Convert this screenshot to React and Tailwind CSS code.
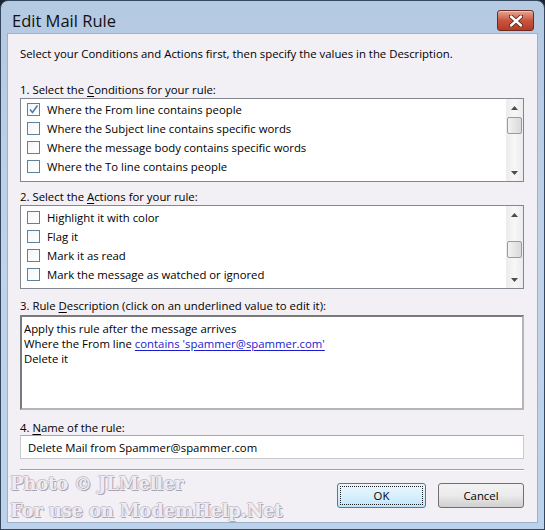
import React from "react";

const conditions = [
  { label: "Where the From line contains people", checked: true },
  { label: "Where the Subject line contains specific words" },
  { label: "Where the message body contains specific words" },
  { label: "Where the To line contains people" },
];

const actions = [
  { label: "Highlight it with color" },
  { label: "Flag it" },
  { label: "Mark it as read" },
  { label: "Mark the message as watched or ignored" },
];

const Checkbox = ({ checked }) => (
  <span className="relative flex h-[13px] w-[13px] shrink-0 items-center justify-center border border-[#5f829b] bg-gradient-to-br from-[#f4f6f8] to-white">
    {checked && (
      <svg width="11" height="11" viewBox="0 0 11 11" className="absolute">
        <path d="M2 5.5 L4.5 8.5 L9.5 1.5" fill="none" stroke="#4a7bbd" strokeWidth="1.6" />
      </svg>
    )}
  </span>
);

const Scrollbar = ({ thumbTop }) => (
  <div className="relative flex w-[17px] flex-col bg-gradient-to-r from-[#ececec] via-[#f7f7f7] to-[#ececec]">
    <div className="flex h-[17px] items-center justify-center">
      <svg width="7" height="4" viewBox="0 0 7 4">
        <path d="M0 4 L3.5 0 L7 4 Z" fill="#4d4d4d" />
      </svg>
    </div>
    <div className="flex-1" />
    <div className="flex h-[17px] items-center justify-center">
      <svg width="7" height="4" viewBox="0 0 7 4">
        <path d="M0 0 L7 0 L3.5 4 Z" fill="#4d4d4d" />
      </svg>
    </div>
    <div
      className={`absolute left-[1px] h-[17px] w-[15px] rounded-[2px] border border-[#9b9b9b] bg-gradient-to-r from-[#f2f2f2] to-[#d9d9d9] ${thumbTop}`}
    />
  </div>
);

const ListBox = ({ items, thumbTop, padTop }) => (
  <div className="flex h-[84px] border border-[#828790] bg-white">
    <div className={`flex flex-1 flex-col pl-[6px] ${padTop}`}>
      {items.map((item, i) => (
        <div key={i} className="flex h-[19px] items-center gap-[7px]">
          <Checkbox checked={item.checked} />
          <span className="text-black">{item.label}</span>
        </div>
      ))}
    </div>
    <Scrollbar thumbTop={thumbTop} />
  </div>
);

const Label = ({ pre, u, post, className }) => (
  <div className={`h-[15px] leading-[15px] text-black ${className}`}>
    {pre}
    <span className="underline underline-offset-2">{u}</span>
    {post}
  </div>
);

export default function App() {
  return (
    <div
      className="h-[530px] w-[545px] bg-[#1a2430] text-[11.35px] leading-[15px]"
      style={{ fontFamily: "'Open Sans', 'Noto Sans', sans-serif" }}
    >
      <div className="relative flex h-full flex-col rounded-t-[8px] border border-[#34475e] bg-gradient-to-b from-[#b4c9e2] via-[#c0d3ea] to-[#bcd2ec]">
        {/* title bar */}
        <div className="flex h-[32px] items-start justify-between pl-[11px] pr-[10px]">
          <span className="pt-[9px] text-[16.5px] leading-[22px] text-[#111]">Edit Mail Rule</span>
          <button className="mt-[9px] flex h-[21px] w-[37px] items-center justify-center rounded-[3px] border border-[#6b2b20] bg-gradient-to-b from-[#e3a593] via-[#c9553f] to-[#b83a24] shadow-[inset_0_1px_0_#f0c4b8]">
            <svg width="14" height="12" viewBox="0 0 14 12">
              <path d="M2 1.5 L12 10.5 M12 1.5 L2 10.5" stroke="#5a2218" strokeWidth="4.2" strokeLinecap="round" />
              <path d="M2 1.5 L12 10.5 M12 1.5 L2 10.5" stroke="#fff" strokeWidth="2.4" strokeLinecap="round" />
            </svg>
          </button>
        </div>

        {/* client area */}
        <div className="mx-[6px] mb-[6px] flex flex-1 flex-col border border-[#9cb1cc] bg-[#f2eff5] pl-[12px] pr-[13px]">
          <div className="mt-[12px] h-[15px] text-black">
            Select your Conditions and Actions first, then specify the values in the Description.
          </div>

          <Label pre="1. Select the " u="C" post="onditions for your rule:" className="mt-[21px]" />
          <div className="mt-[1px]">
            <ListBox items={conditions} thumbTop="top-[18px]" padTop="pt-[1px]" />
          </div>

          <Label pre="2. Select the " u="A" post="ctions for your rule:" className="mt-[7px]" />
          <div className="mt-[1px]">
            <ListBox items={actions} thumbTop="top-[35px]" padTop="pt-[2px]" />
          </div>

          <Label pre="3. Rule " u="D" post="escription (click on an underlined value to edit it):" className="mt-[9px]" />
          <div className="mt-[2px] h-[95px] border-2 border-t-[#7a7a7a] border-l-[#7a7a7a] border-r-[#b5b5b5] border-b-[#b5b5b5] bg-white px-[2px] pt-[4px] text-black">
            <div className="h-[15px]">Apply this rule after the message arrives</div>
            <div className="h-[15px]">
              Where the From line{" "}
              <span className="text-[#1a1ad0] underline underline-offset-2">contains 'spammer@spammer.com'</span>
            </div>
            <div className="h-[15px]">Delete it</div>
          </div>

          <Label pre="4. " u="N" post="ame of the rule:" className="mt-[10px]" />
          <div className="flex h-[24px] items-center border border-[#c8cacf] border-t-[#a5a8ae] bg-white pl-[7px] text-black">
            Delete Mail from Spammer@spammer.com
          </div>

          <div className="mt-[10px] h-[2px] border-t border-[#a3a1a7] border-b border-b-white" />

          <div className="mt-[12px] flex justify-end gap-[12px]">
            <button className="flex h-[25px] w-[89px] items-center justify-center rounded-[3px] border border-[#3c7fb1] bg-gradient-to-b from-[#eaf6fd] via-[#d9f0fc] to-[#bee6fd] p-[2px] text-black">
              <span className="flex h-full w-full items-center justify-center border border-dotted border-[#222]">OK</span>
            </button>
            <button className="flex h-[25px] w-[86px] items-center justify-center rounded-[3px] border border-[#707070] bg-gradient-to-b from-[#f2f2f2] via-[#ebebeb] to-[#cfcfcf] text-black">
              Cancel
            </button>
          </div>
        </div>

        {/* watermark */}
        <div
          className="absolute left-[9px] top-[469px] text-[18px] font-bold leading-[27px] tracking-[-0.2px] text-[#eeebf2] [text-shadow:1px_1px_0_#aaa5b2,-1px_0_0_#c9c4cf,0_-1px_0_#c9c4cf]"
          style={{ fontFamily: "'DejaVu Serif', serif" }}
        >
          <div>Photo © JLMeller</div>
          <div>For use on ModemHelp.Net</div>
        </div>
      </div>
    </div>
  );
}
